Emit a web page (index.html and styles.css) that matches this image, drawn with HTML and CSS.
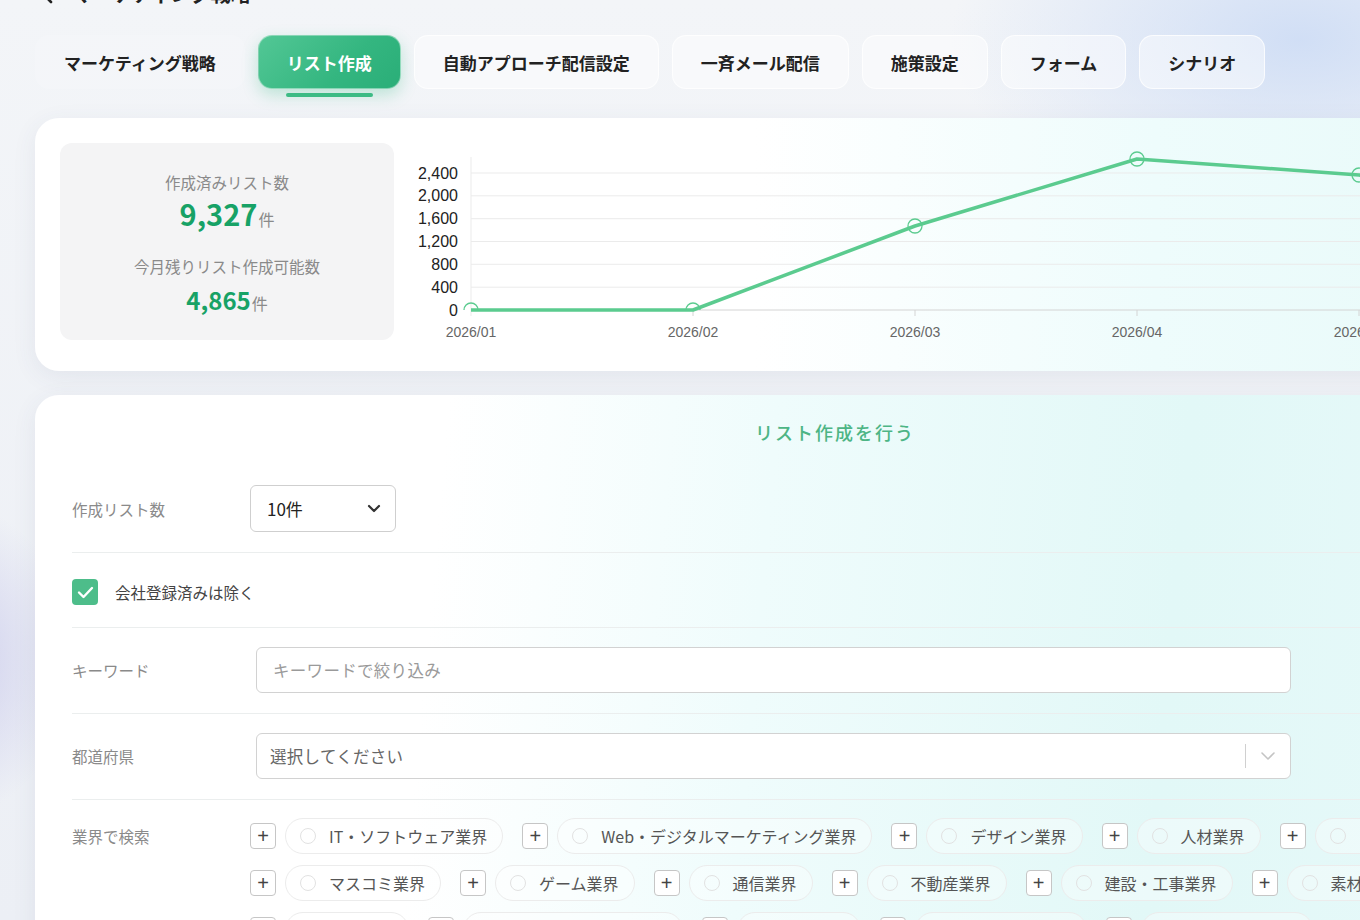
FILE: index.html
```html
<!DOCTYPE html>
<html lang="ja">
<head>
  <meta charset="UTF-8" />
  <title>リスト作成</title>
  <link rel="stylesheet" href="styles.css">
</head>
<body>
  <div class="page">

    <div class="page-title">
      <svg class="back-icon" width="14" height="20" viewBox="0 0 14 20"><path d="M11 2 3 10l8 8" fill="none" stroke="#222" stroke-width="2.6" stroke-linecap="round" stroke-linejoin="round"/></svg>
      <span>マーケティング戦略</span>
    </div>

    <nav class="tabs">
      <button class="tab">マーケティング戦略</button>
      <button class="tab active">リスト作成</button>
      <button class="tab">自動アプローチ配信設定</button>
      <button class="tab">一斉メール配信</button>
      <button class="tab">施策設定</button>
      <button class="tab">フォーム</button>
      <button class="tab">シナリオ</button>
    </nav>

    <section class="card stats-card">
      <div class="stats-box">
        <div class="stat-label">作成済みリスト数</div>
        <div class="stat-value big">9,327<span class="unit">件</span></div>
        <div class="stat-label second">今月残りリスト作成可能数</div>
        <div class="stat-value small">4,865<span class="unit">件</span></div>
      </div>

      <svg class="chart" width="1200" height="205" viewBox="0 0 1200 205">
        <defs>
          <clipPath id="aboveAxis"><rect x="0" y="0" width="1200" height="167"/></clipPath>
        </defs>
        <g stroke="#ebebeb" stroke-width="1">
          <line x1="71" y1="30" x2="1200" y2="30"/>
          <line x1="71" y1="52.8" x2="1200" y2="52.8"/>
          <line x1="71" y1="75.7" x2="1200" y2="75.7"/>
          <line x1="71" y1="98.5" x2="1200" y2="98.5"/>
          <line x1="71" y1="121.3" x2="1200" y2="121.3"/>
          <line x1="71" y1="144.2" x2="1200" y2="144.2"/>
          <line x1="71" y1="14" x2="71" y2="173"/>
        </g>
        <g stroke="#d4d4d4" stroke-width="1">
          <line x1="71" y1="167" x2="1200" y2="167"/>
          <line x1="293" y1="167" x2="293" y2="173"/>
          <line x1="515" y1="167" x2="515" y2="173"/>
          <line x1="737" y1="167" x2="737" y2="173"/>
          <line x1="959" y1="167" x2="959" y2="173"/>
          <line x1="1181" y1="167" x2="1181" y2="173"/>
        </g>
        <g class="y-labels" text-anchor="end">
          <text x="58" y="35.5">2,400</text>
          <text x="58" y="58.3">2,000</text>
          <text x="58" y="81.2">1,600</text>
          <text x="58" y="104">1,200</text>
          <text x="58" y="126.8">800</text>
          <text x="58" y="149.7">400</text>
          <text x="58" y="172.5">0</text>
        </g>
        <g class="x-labels" text-anchor="middle">
          <text x="71" y="194">2026/01</text>
          <text x="293" y="194">2026/02</text>
          <text x="515" y="194">2026/03</text>
          <text x="737" y="194">2026/04</text>
          <text x="959" y="194">2026/05</text>
          <text x="1181" y="194">2026/06</text>
        </g>
        <polyline points="71,167 293,167 515,83 737,16 959,32 1181,60" fill="none" stroke="#5bcb8f" stroke-width="3.5" stroke-linejoin="round"/>
        <g fill="none" stroke="#5bcb8f" stroke-width="1.3" clip-path="url(#aboveAxis)">
          <circle cx="71" cy="167" r="7"/>
          <circle cx="293" cy="167" r="7"/>
          <circle cx="515" cy="83" r="7"/>
          <circle cx="737" cy="16" r="7"/>
          <circle cx="959" cy="32" r="7"/>
          <circle cx="1181" cy="60" r="7"/>
        </g>
      </svg>
    </section>

    <section class="card form-card">
      <h2 class="form-title">リスト作成を行う</h2>

      <div class="form-row count-row">
        <label class="row-label">作成リスト数</label>
        <div class="count-select">
          <span>10件</span>
          <svg width="14" height="9" viewBox="0 0 14 9"><path d="M2 2l5 5 5-5" fill="none" stroke="#333" stroke-width="2.2" stroke-linecap="round" stroke-linejoin="round"/></svg>
        </div>
      </div>

      <div class="form-row check-row">
        <span class="checkbox">
          <svg width="17" height="13" viewBox="0 0 17 13"><path d="M2 6.5l4.5 4.5L15 2" fill="none" stroke="#fff" stroke-width="2.4" stroke-linecap="round" stroke-linejoin="round"/></svg>
        </span>
        <span class="check-text">会社登録済みは除く</span>
      </div>

      <div class="form-row">
        <label class="row-label">キーワード</label>
        <div class="text-input placeholder">キーワードで絞り込み</div>
      </div>

      <div class="form-row">
        <label class="row-label">都道府県</label>
        <div class="text-input pref-select">
          <span>選択してください</span>
          <span class="select-side">
            <span class="sep"></span>
            <svg width="16" height="10" viewBox="0 0 16 10"><path d="M2 2l6 6 6-6" fill="none" stroke="#c4c4c4" stroke-width="1.6" stroke-linecap="round" stroke-linejoin="round"/></svg>
          </span>
        </div>
      </div>

      <div class="form-row industry-row">
        <label class="row-label">業界で検索</label>
        <div class="chips">
          <div class="chip-row">
            <div class="chip-group"><span class="plus">+</span><span class="chip"><i></i>IT・ソフトウェア業界</span></div>
            <div class="chip-group"><span class="plus">+</span><span class="chip"><i></i>Web・デジタルマーケティング業界</span></div>
            <div class="chip-group"><span class="plus">+</span><span class="chip"><i></i>デザイン業界</span></div>
            <div class="chip-group"><span class="plus">+</span><span class="chip"><i></i>人材業界</span></div>
            <div class="chip-group"><span class="plus">+</span><span class="chip"><i></i>コンサルティング業界</span></div>
          </div>
          <div class="chip-row">
            <div class="chip-group"><span class="plus">+</span><span class="chip"><i></i>マスコミ業界</span></div>
            <div class="chip-group"><span class="plus">+</span><span class="chip"><i></i>ゲーム業界</span></div>
            <div class="chip-group"><span class="plus">+</span><span class="chip"><i></i>通信業界</span></div>
            <div class="chip-group"><span class="plus">+</span><span class="chip"><i></i>不動産業界</span></div>
            <div class="chip-group"><span class="plus">+</span><span class="chip"><i></i>建設・工事業界</span></div>
            <div class="chip-group"><span class="plus">+</span><span class="chip"><i></i>素材業界</span></div>
          </div>
          <div class="chip-row">
            <div class="chip-group"><span class="plus">+</span><span class="chip"><i></i>金融業界</span></div>
            <div class="chip-group"><span class="plus">+</span><span class="chip"><i></i>医療・福祉・介護業界</span></div>
            <div class="chip-group"><span class="plus">+</span><span class="chip"><i></i>物流業界</span></div>
            <div class="chip-group"><span class="plus">+</span><span class="chip"><i></i>食品・飲料業界</span></div>
            <div class="chip-group"><span class="plus">+</span><span class="chip"><i></i>小売・流通業界</span></div>
          </div>
        </div>
      </div>
    </section>

  </div>
</body>
</html>
```

FILE: styles.css
```css
* {
  box-sizing: border-box;
}

body {
  margin: 0;
  width: 1360px;
  height: 920px;
  overflow: hidden;
  font-family: "Noto Sans CJK JP", "Noto Sans", sans-serif;
  color: #222;
  background:
    radial-gradient(ellipse 500px 260px at 1300px 40px, rgba(205, 220, 245, 0.9), rgba(205, 220, 245, 0) 70%),
    radial-gradient(ellipse 160px 220px at -40px 660px, rgba(200, 200, 235, 0.8), rgba(200, 200, 235, 0) 70%),
    linear-gradient(180deg, #f3f5f8 0%, #eceff5 100%);
}

.page {
  width: 1640px;
  padding-left: 35px;
}

/* title (scrolled mostly out of view) */
.page-title {
  margin-top: -20px;
  height: 28px;
  display: flex;
  align-items: center;
  gap: 18px;
  padding-left: 5px;
  font-size: 20px;
  font-weight: bold;
  line-height: 28px;
}

/* tabs */
.tabs {
  margin-top: 27px;
  display: flex;
  gap: 13px;
}

.tab {
  position: relative;
  height: 54px;
  padding: 0 28px;
  border: 1px solid rgba(255, 255, 255, 0.75);
  border-radius: 14px;
  background: rgba(255, 255, 255, 0.45);
  font-family: inherit;
  font-size: 17px;
  font-weight: bold;
  color: #222;
  cursor: pointer;
}

.tab:first-child {
  background: rgba(255, 255, 255, 0.15);
  border-color: transparent;
}

.tab.active {
  color: #fff;
  border-color: rgba(255, 255, 255, 0.4);
  background: linear-gradient(135deg, #52c795 0%, #34b680 60%, #2aae78 100%);
  box-shadow: 0 6px 16px rgba(52, 182, 128, 0.28);
}

.tab.active::after {
  content: "";
  position: absolute;
  left: 27px;
  right: 27px;
  bottom: -9px;
  height: 4px;
  border-radius: 2px;
  background: #3dbb85;
}

/* cards */
.card {
  width: 1600px;
  border-radius: 24px;
  box-shadow: 0 6px 24px rgba(60, 80, 110, 0.08);
}

.stats-card {
  margin-top: 29px;
  height: 253px;
  padding: 25px;
  display: flex;
  gap: 6px;
  background: linear-gradient(90deg, #ffffff 0%, #ffffff 45%, #eefcfc 70%, #e6f9f8 100%);
}

.stats-box {
  width: 334px;
  height: 197px;
  flex-shrink: 0;
  border-radius: 12px;
  background: #f4f4f5;
  text-align: center;
  padding-top: 27px;
}

.stat-label {
  font-size: 15.5px;
  color: #8a8a8a;
  line-height: 24px;
}

.stat-label.second {
  margin-top: 16px;
}

.stat-value {
  font-size: 24px;
  font-weight: bold;
  color: #17a266;
  line-height: 34px;
}

.stat-value.big {
  font-size: 29px;
  line-height: 38px;
}

.stat-value.small {
  margin-top: 5px;
}

.unit {
  font-size: 16px;
  font-weight: normal;
  color: #8a8a8a;
  margin-left: 1px;
}

.chart {
  flex-shrink: 0;
  font-family: "Liberation Sans", Arial, sans-serif;
}

.y-labels {
  font-size: 16px;
  fill: #222;
}

.x-labels {
  font-size: 14px;
  fill: #666;
}

/* list creation form */
.form-card {
  margin-top: 24px;
  min-height: 600px;
  padding: 24px 0 0 37px;
  background: linear-gradient(95deg, #ffffff 0%, #ffffff 25%, #effcfc 45%, #e2f8f7 70%, #e8f9fa 100%);
}

.form-title {
  margin: 0 0 20px;
  margin-left: -37px;
  text-align: center;
  font-size: 18px;
  font-weight: 500;
  letter-spacing: 2px;
  line-height: 26px;
  color: #4db585;
}

.form-row {
  display: flex;
  align-items: center;
  padding: 19px 0 20px;
  border-bottom: 1px solid #ebeeee;
}

.row-label {
  width: 184px;
  flex-shrink: 0;
  font-size: 15.5px;
  color: #8a8a8a;
}

.count-row {
  padding: 20px 0;
}

.count-row .row-label {
  width: 178px;
}

.count-select {
  width: 146px;
  height: 47px;
  padding: 0 14px 0 16px;
  display: flex;
  align-items: center;
  justify-content: space-between;
  border: 1px solid #cfcfcf;
  border-radius: 6px;
  background: #fff;
  font-size: 17px;
  color: #222;
}

.check-row {
  padding: 26px 0 22px;
}

.checkbox {
  width: 26px;
  height: 26px;
  border-radius: 4px;
  background: #4dbd8a;
  display: flex;
  align-items: center;
  justify-content: center;
}

.check-text {
  margin-left: 17px;
  font-size: 15.5px;
  color: #444;
  line-height: 26px;
}

.text-input {
  width: 1035px;
  height: 46px;
  display: flex;
  align-items: center;
  padding: 0 16px;
  border: 1px solid #d2d2d2;
  border-radius: 6px;
  background: #fff;
  font-size: 16.5px;
  letter-spacing: 0.3px;
}

.placeholder {
  color: #9a9a9a;
}

.pref-select {
  justify-content: space-between;
  padding: 0 14px 0 13px;
  color: #666;
}

.select-side {
  display: flex;
  align-items: center;
  gap: 14px;
}

.sep {
  width: 1px;
  height: 24px;
  background: #d0d0d0;
}

/* industry chips */
.industry-row {
  align-items: flex-start;
  padding: 18px 0 0;
  border-bottom: none;
}

.industry-row .row-label {
  width: 178px;
  line-height: 36px;
}

.chips {
  display: flex;
  flex-direction: column;
  gap: 11px;
}

.chip-row {
  display: flex;
  gap: 19px;
}

.chip-group {
  display: flex;
  align-items: center;
  gap: 9px;
  flex-shrink: 0;
}

.plus {
  width: 26px;
  height: 26px;
  border: 1px solid #c6c6c6;
  border-radius: 4px;
  background: #fff;
  display: flex;
  align-items: center;
  justify-content: center;
  font-family: "Liberation Sans", Arial, sans-serif;
  font-size: 20px;
  color: #444;
  line-height: 1;
}

.chip {
  height: 36px;
  padding: 0 15px 0 14px;
  display: flex;
  align-items: center;
  gap: 13px;
  border: 1px solid #ececec;
  border-radius: 18px;
  background: rgba(255, 255, 255, 0.35);
  font-size: 16px;
  color: #555;
  white-space: nowrap;
}

.chip i {
  width: 16px;
  height: 16px;
  border: 1px solid #e2e2e2;
  border-radius: 50%;
}
```
